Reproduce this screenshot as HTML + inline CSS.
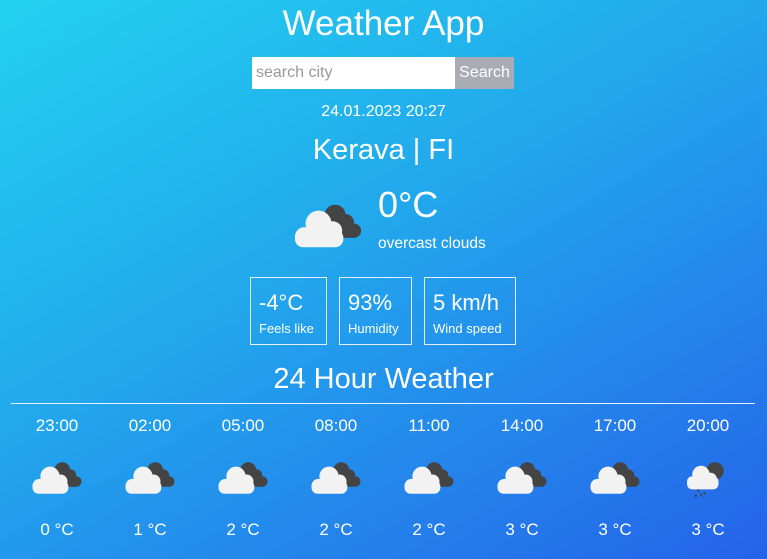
<!DOCTYPE html>
<html><head><meta charset="utf-8"><style>
body{margin:0;width:767px;height:559px;overflow:hidden;font-family:"Liberation Sans",sans-serif;color:#fff;background:linear-gradient(150deg,#22d2ef 0%,#22a6ec 45%,#2563ea 100%);position:relative}
.a{position:absolute}
h1{position:absolute;top:4px;left:0;width:767px;text-align:center;margin:0;font-weight:normal;font-size:35px}
.box{position:absolute;top:277px;height:68px;border:1px solid #e6f0ff;box-sizing:border-box;padding:12px 8px 0}
.box b{display:block;font-weight:normal;font-size:22px}
.box span{display:block;font-size:13px;margin-top:5px}
.col{position:absolute;width:80px;text-align:center}
</style></head><body>
<svg width="0" height="0" style="position:absolute"><defs>
<g id="c">
<circle cx="38" cy="13" r="9" fill="#444"/><circle cx="47" cy="19" r="7" fill="#444"/><circle cx="54" cy="26" r="6" fill="#444"/><rect x="38" y="20" width="16" height="12" fill="#444"/>
<circle cx="24" cy="20" r="11" fill="#f2f2f2"/><circle cx="36" cy="26" r="8" fill="#f2f2f2"/><circle cx="12" cy="31" r="8" fill="#f2f2f2"/><rect x="4" y="25" width="41" height="15" rx="7" fill="#f2f2f2"/>
</g>
<g id="r">
<circle cx="40" cy="14" r="10" fill="#444"/>
<circle cx="24" cy="18" r="10" fill="#f2f2f2"/><circle cx="35" cy="23" r="7" fill="#f2f2f2"/><rect x="8" y="20" width="36" height="15" rx="6" fill="#f2f2f2"/>
<g fill="#444"><rect x="20" y="35" width="2" height="3"/><rect x="17" y="41" width="2" height="3"/><rect x="23" y="40" width="2" height="3"/><rect x="27" y="38" width="2" height="3"/><rect x="22" y="45" width="2" height="2"/><rect x="26" y="44" width="2" height="2"/></g>
</g></defs></svg>
<h1>Weather App</h1>
<div class="a" style="left:252px;top:57px;width:203px;height:32px;background:#fff;color:#999;font-size:16px;line-height:32px;padding-left:4px;box-sizing:border-box">search city</div>
<div class="a" style="left:455px;top:57px;width:59px;height:32px;background:#a9acb2;font-size:16px;line-height:32px;text-align:center">Search</div>
<div class="a" style="left:0;top:103px;width:767px;text-align:center;font-size:16px">24.01.2023 20:27</div>
<div class="a" style="left:0;top:134px;width:767px;text-align:center;font-size:29px">Kerava | FI</div>
<svg class="a" style="left:290px;top:200px" width="76" height="52" viewBox="0 0 64 44"><use href="#c"/></svg>
<div class="a" style="left:378px;top:184px;font-size:36px">0°C</div>
<div class="a" style="left:378px;top:235px;font-size:15.5px">overcast clouds</div>
<div class="box" style="left:250px;width:77px"><b>-4°C</b><span>Feels like</span></div>
<div class="box" style="left:339px;width:73px"><b>93%</b><span>Humidity</span></div>
<div class="box" style="left:424px;width:92px"><b>5 km/h</b><span>Wind speed</span></div>
<div class="a" style="left:0;top:363px;width:767px;text-align:center;font-size:29px">24 Hour Weather</div>
<div class="a" style="left:11px;top:403px;width:744px;height:1px;background:#e6f0ff"></div>
<div class="col" style="left:17px;top:416px;font-size:17px">23:00<br><svg style="margin-top:22px" width="56" height="40" viewBox="0 0 64 44"><use href="#c"/></svg><div style="margin-top:17px">0 °C</div></div>
<div class="col" style="left:110px;top:416px;font-size:17px">02:00<br><svg style="margin-top:22px" width="56" height="40" viewBox="0 0 64 44"><use href="#c"/></svg><div style="margin-top:17px">1 °C</div></div>
<div class="col" style="left:203px;top:416px;font-size:17px">05:00<br><svg style="margin-top:22px" width="56" height="40" viewBox="0 0 64 44"><use href="#c"/></svg><div style="margin-top:17px">2 °C</div></div>
<div class="col" style="left:296px;top:416px;font-size:17px">08:00<br><svg style="margin-top:22px" width="56" height="40" viewBox="0 0 64 44"><use href="#c"/></svg><div style="margin-top:17px">2 °C</div></div>
<div class="col" style="left:389px;top:416px;font-size:17px">11:00<br><svg style="margin-top:22px" width="56" height="40" viewBox="0 0 64 44"><use href="#c"/></svg><div style="margin-top:17px">2 °C</div></div>
<div class="col" style="left:482px;top:416px;font-size:17px">14:00<br><svg style="margin-top:22px" width="56" height="40" viewBox="0 0 64 44"><use href="#c"/></svg><div style="margin-top:17px">3 °C</div></div>
<div class="col" style="left:575px;top:416px;font-size:17px">17:00<br><svg style="margin-top:22px" width="56" height="40" viewBox="0 0 64 44"><use href="#c"/></svg><div style="margin-top:17px">3 °C</div></div>
<div class="col" style="left:668px;top:416px;font-size:17px">20:00<br><svg style="margin-top:22px" width="56" height="40" viewBox="0 0 64 44"><use href="#r"/></svg><div style="margin-top:17px">3 °C</div></div>
</body></html>
